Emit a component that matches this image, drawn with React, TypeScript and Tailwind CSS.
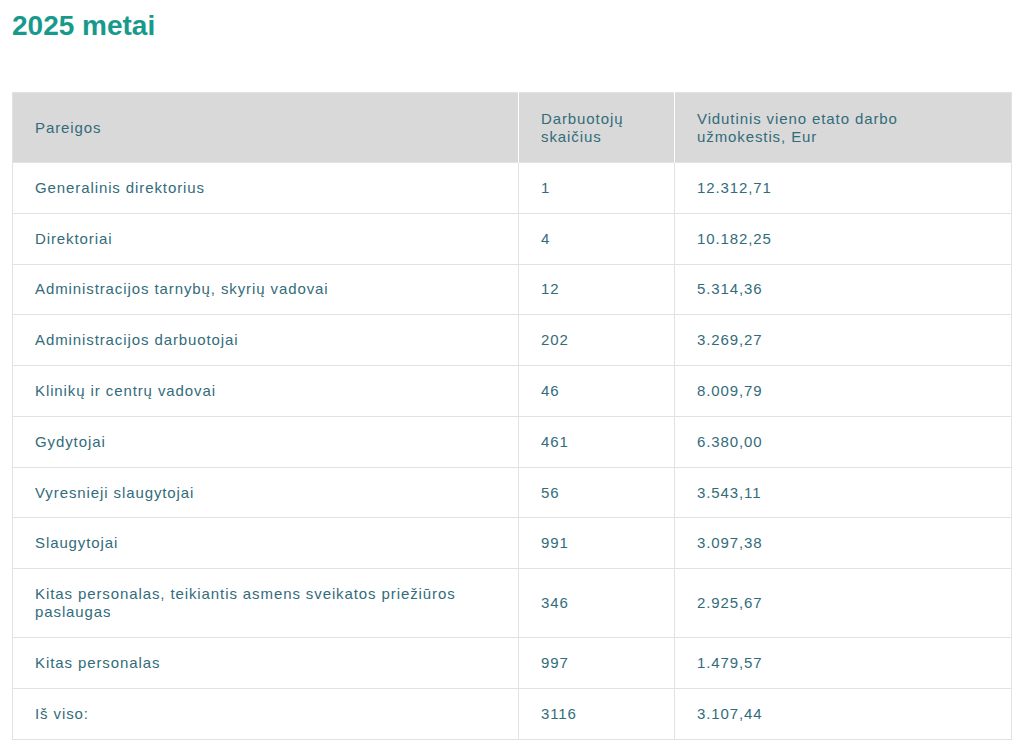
const rows: [string, string, string][] = [
  ["Generalinis direktorius", "1", "12.312,71"],
  ["Direktoriai", "4", "10.182,25"],
  ["Administracijos tarnybų, skyrių vadovai", "12", "5.314,36"],
  ["Administracijos darbuotojai", "202", "3.269,27"],
  ["Klinikų ir centrų vadovai", "46", "8.009,79"],
  ["Gydytojai", "461", "6.380,00"],
  ["Vyresnieji slaugytojai", "56", "3.543,11"],
  ["Slaugytojai", "991", "3.097,38"],
  ["Kitas personalas, teikiantis asmens sveikatos priežiūros paslaugas", "346", "2.925,67"],
  ["Kitas personalas", "997", "1.479,57"],
  ["Iš viso:", "3116", "3.107,44"],
];

export default function App() {
  return (
    <div className="min-h-screen bg-white px-3 pt-2 font-['Liberation_Sans',Arial,sans-serif]">
      <h2 className="text-[28px] leading-[36px] font-bold text-[#17998b]">2025 metai</h2>

      <table className="mt-[48px] w-[1000px] border-collapse border border-[#e2e2e2] text-[15px] leading-[18px] tracking-[0.9px] text-[#326c7b]">
        <thead>
          <tr className="h-[70px] bg-[#d9d9d9]">
            <th className="w-[506px] border-r border-white py-4 pl-[22px] pr-4 text-left font-normal">Pareigos</th>
            <th className="w-[156px] border-r border-white py-4 pl-[22px] pr-4 text-left font-normal">
              Darbuotojų
              <br />
              skaičius
            </th>
            <th className="py-4 pl-[22px] pr-4 text-left font-normal">
              Vidutinis vieno etato darbo
              <br />
              užmokestis, Eur
            </th>
          </tr>
        </thead>
        <tbody>
          {rows.map(([name, count, pay]) => (
            <tr key={name} className="border-t border-[#e2e2e2]">
              <td className="border-r border-[#e2e2e2] py-[15.9px] pl-[22px] pr-[40px]">{name}</td>
              <td className="border-r border-[#e2e2e2] py-[15.9px] pl-[22px] pr-4">{count}</td>
              <td className="py-[15.9px] pl-[22px] pr-4">{pay}</td>
            </tr>
          ))}
        </tbody>
      </table>
    </div>
  );
}
